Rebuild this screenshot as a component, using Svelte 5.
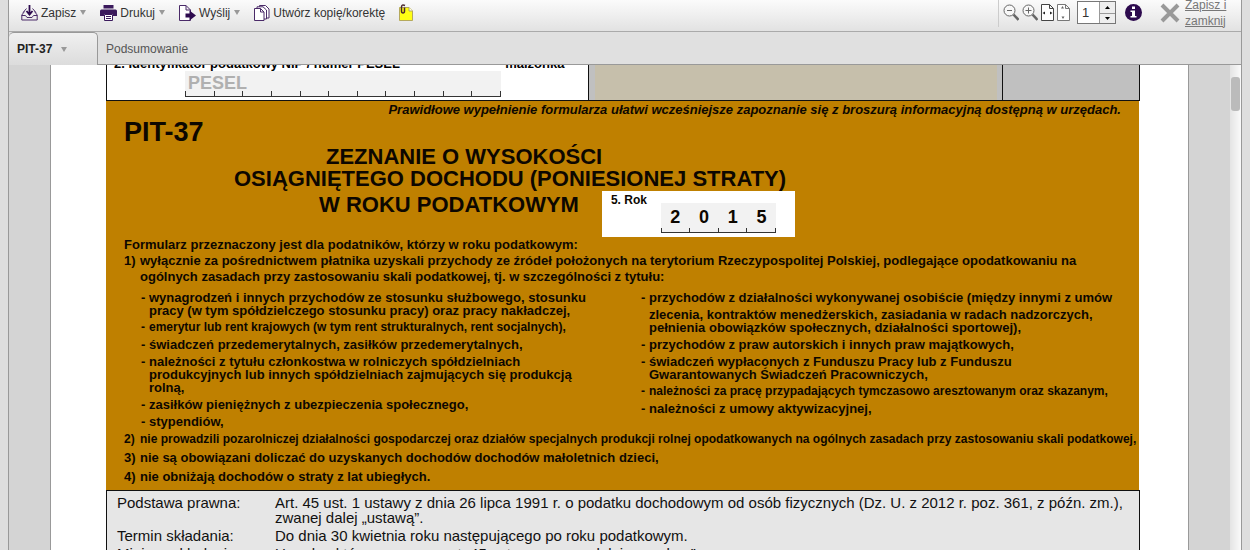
<script lang="ts">
	type Item = { lines: string[]; continued?: boolean; dense?: boolean };

	let pageNumber = $state(1);
	let pesel = $state('');
	let year = $state(['2', '0', '1', '5']);

	const incomeLeft: Item[] = [
		{ lines: ['wynagrodzeń i innych przychodów ze stosunku służbowego, stosunku', 'pracy (w tym spółdzielczego stosunku pracy) oraz pracy nakładczej,'] },
		{ lines: ['emerytur lub rent krajowych (w tym rent strukturalnych, rent socjalnych),'], dense: true },
		{ lines: ['świadczeń przedemerytalnych, zasiłków przedemerytalnych,'] },
		{ lines: ['należności z tytułu członkostwa w rolniczych spółdzielniach', 'produkcyjnych lub innych spółdzielniach zajmujących się produkcją', 'rolną,'] },
		{ lines: ['zasiłków pieniężnych z ubezpieczenia społecznego,'] },
		{ lines: ['stypendiów,'] }
	];

	const incomeRight: Item[] = [
		{ lines: ['przychodów z działalności wykonywanej osobiście (między innymi z umów'] },
		{ lines: ['zlecenia, kontraktów menedżerskich, zasiadania w radach nadzorczych,', 'pełnienia obowiązków społecznych, działalności sportowej),'], continued: true },
		{ lines: ['przychodów z praw autorskich i innych praw majątkowych,'] },
		{ lines: ['świadczeń wypłaconych z Funduszu Pracy lub z Funduszu', 'Gwarantowanych Świadczeń Pracowniczych,'] },
		{ lines: ['należności za pracę przypadających tymczasowo aresztowanym oraz skazanym,'], dense: true },
		{ lines: ['należności z umowy aktywizacyjnej,'] }
	];
</script>

{#snippet incomeList(items: Item[])}
	<ul>
		{#each items as item}
			<li class:continued={item.continued} class:dense={item.dense}>
				{#each item.lines as line}
					<span class="line">{line}</span>
				{/each}
			</li>
		{/each}
	</ul>
{/snippet}

<div class="app">
	<header class="toolbar">
		<div class="actions">
			<button>
				<svg width="17" height="16" viewBox="0 0 17 16" fill="none" stroke="#4a2a68">
					<path d="M3.500 6.500L.8 10v5h15.400v-5l-2.700-3.500M.8 10.500h3.700l1.500 2h5l1.500-2h3.700" />
					<path d="M8.500 0v8M5.500 6l3 3.500 3-3.500" stroke="#2d0a4e" stroke-width="1.800" />
					<path d="M2 7.500l3.500-4M15 7.500l-3.500-4" />
				</svg>
				Zapisz <i class="caret"></i>
			</button>
			<button>
				<svg width="17" height="16" viewBox="0 0 17 16" fill="#3b1a5c">
					<path d="M3.500 0h10v3.500h-10z" />
					<path d="M1.500 4.500h14q1.500 0 1.500 1.500v5h-4V9H4v2H0V6q0-1.500 1.500-1.500z" />
					<path d="M4.500 9.500h8v6h-8z" fill="#fff" stroke="#3b1a5c" />
					<path d="M6 11h5v1H6zM6 13h5v1H6z" />
				</svg>
				Drukuj <i class="caret"></i>
			</button>
			<button>
				<svg width="17" height="16" viewBox="0 0 17 16" fill="#fff" stroke="#4a2a68">
					<path d="M11.500 15.500H.5V.5H7L11.500 5zM7 .5V5h4.500" />
					<path d="M6.500 8.500h4V5.500L17 10.500l-6.500 5v-3h-4z" fill="#2d0a4e" stroke="none" />
				</svg>
				Wyślij <i class="caret"></i>
			</button>
			<button>
				<svg width="16" height="16" viewBox="0 0 16 16" fill="#fff" stroke="#4a2a68">
					<path d="M5.500.5h6l3.500 3.500v9h-9.500z" />
					<path d="M3 1.800h6L12.500 5v9H3z" />
					<path d="M.5 3.500h6L10 7v8.500H.5zM6.500 3.500V7H10" />
				</svg>
				Utwórz kopię/korektę
			</button>
			<button aria-label="Załącznik">
				<svg width="14" height="17" viewBox="0 0 14 17">
					<path d="M.5 3.500H10L13.500 7v9.500H.5z" fill="#ffff14" stroke="#b5a95c" />
					<path d="M10 3.500V7h3.500" fill="#fff" stroke="#b5a95c" />
					<path d="M6 1.500Q2.500 0 2.500 3v4q0 2 1.500 2t1.500-2V3.500" fill="none" stroke="#4a2a30" stroke-width="1.500" />
				</svg>
			</button>
		</div>
		<div class="view-tools">
			<button aria-label="Pomniejsz">
				<svg width="16" height="17" viewBox="0 0 16 17" fill="none" stroke="#666">
					<path d="M10.500 10.500l5 5.500" stroke-width="2.600" />
					<circle cx="6.500" cy="6.500" r="5.500" fill="#f8f8f8" />
					<path d="M4 6.500h5" />
				</svg>
			</button>
			<button aria-label="Powiększ">
				<svg width="16" height="17" viewBox="0 0 16 17" fill="none" stroke="#666">
					<path d="M10.500 10.500l5 5.500" stroke-width="2.600" />
					<circle cx="6.500" cy="6.500" r="5.500" fill="#f8f8f8" />
					<path d="M3.500 6.500h6M6.500 3.500v6" />
				</svg>
			</button>
			<button aria-label="Dopasuj szerokość">
				<svg width="13" height="17" viewBox="0 0 13 17">
					<path d="M.5.5h8l4 4v12H.5zM8.500.5v4h4" fill="#fff" stroke="#444" />
					<path d="M1.500 9L4 7.500v3zM11.500 9L9 7.500v3z" fill="#222" />
				</svg>
			</button>
			<button aria-label="Dopasuj stronę">
				<svg width="13" height="17" viewBox="0 0 13 17">
					<path d="M.5.5h8l4 4v12H.5zM8.500.5v4h4" fill="#fff" stroke="#777" />
					<path d="M5.500 2L7 4.500H4zM6 15l1.500-2.500h-3z" fill="#666" />
				</svg>
			</button>
			<div class="stepper">
				<input type="text" aria-label="Strona" bind:value={pageNumber} />
				<div class="arrows">
					<button aria-label="Następna strona" onclick={() => pageNumber++}>
						<svg width="5" height="3" viewBox="0 0 5 3"><path d="M0 3L2.500 0 5 3z" /></svg>
					</button>
					<button aria-label="Poprzednia strona" onclick={() => pageNumber--}>
						<svg width="5" height="3" viewBox="0 0 5 3"><path d="M0 0h5L2.500 3z" /></svg>
					</button>
				</div>
			</div>
			<button class="info" aria-label="Informacje">
				<svg width="17" height="17" viewBox="0 0 17 17">
					<circle cx="8.500" cy="8.500" r="8.500" fill="#2d0a4e" />
					<path d="M7 2.500h3v2.500H7zM5.500 6.500H10V12h1.500v1.500h-6V12H7V8H5.500z" fill="#fff" />
				</svg>
			</button>
			<a class="close" href="#zamknij">
				<svg width="20" height="20" viewBox="0 0 20 20" stroke="#999" stroke-width="4">
					<path d="M2 2l16 16M18 2L2 18" />
				</svg>
				<span>Zapisz i zamknij</span>
			</a>
		</div>
	</header>

	<nav class="tabs">
		<button class="tab active">PIT-37 <i class="caret"></i></button>
		<button class="tab">Podsumowanie</button>
	</nav>

	<main class="viewer">
		<div class="sheet">
			<section class="identity">
				<div class="taxpayer">
					<label for="pesel">2. Identyfikator <s>podatkowy NIP</s> / numer PESEL <span class="spouse">małżonka</span></label>
					<div class="comb pesel">
						<input id="pesel" type="text" placeholder="PESEL" bind:value={pesel} />
						<div class="ticks">
							{#each Array(11) as _}<i></i>{/each}
						</div>
					</div>
				</div>
				<div class="office"></div>
				<div class="stamp"></div>
			</section>

			<section class="form-head">
				<p class="hint">Prawidłowe wypełnienie formularza ułatwi wcześniejsze zapoznanie się z broszurą informacyjną dostępną w urzędach.</p>
				<h1>PIT-37</h1>
				<div class="title">
					<h2><span class="lead">ZEZNANIE O WYSOKOŚCI</span> OSIĄGNIĘTEGO DOCHODU (PONIESIONEJ STRATY)</h2>
					<div class="year-row">
						<h2>W ROKU PODATKOWYM</h2>
						<div class="year">
							<span>5. Rok</span>
							<div class="comb digits">
								<div class="cells">
									{#each year as _, i}
										<input type="text" maxlength="1" aria-label="Rok, cyfra {i + 1}" bind:value={year[i]} />
									{/each}
								</div>
								<div class="ticks">
									{#each year as _}<i></i>{/each}
								</div>
							</div>
						</div>
					</div>
				</div>

				<div class="scope">
					<p>Formularz przeznaczony jest dla podatników, którzy w roku podatkowym:</p>
					<ol>
						<li>
							wyłącznie za pośrednictwem płatnika uzyskali przychody ze źródeł położonych na terytorium Rzeczypospolitej Polskiej, podlegające opodatkowaniu na
							ogólnych zasadach przy zastosowaniu skali podatkowej, tj. w szczególności z tytułu:
							<div class="income">
								{@render incomeList(incomeLeft)}
								{@render incomeList(incomeRight)}
							</div>
						</li>
						<li class="dense">nie prowadzili pozarolniczej działalności gospodarczej oraz działów specjalnych produkcji rolnej opodatkowanych na ogólnych zasadach przy zastosowaniu skali podatkowej,</li>
						<li>nie są obowiązani doliczać do uzyskanych dochodów dochodów małoletnich dzieci,</li>
						<li>nie obniżają dochodów o straty z lat ubiegłych.</li>
					</ol>
				</div>
			</section>

			<dl class="legal">
				<dt>Podstawa prawna:</dt>
				<dd>Art. 45 ust. 1 ustawy z dnia 26 lipca 1991 r. o podatku dochodowym od osób fizycznych (Dz. U. z 2012 r. poz. 361, z późn. zm.),<br />zwanej dalej „ustawą”.</dd>
				<dt>Termin składania:</dt>
				<dd>Do dnia 30 kwietnia roku następującego po roku podatkowym.</dd>
				<dt>Miejsce składania:</dt>
				<dd>Urząd, o którym mowa w art. 45 ustawy, zwany dalej „urzędem”.</dd>
			</dl>
		</div>
		<div class="scrollbar"><div class="thumb"></div></div>
	</main>
</div>

<style>
	:global(body) {
		margin: 0;
		background: #dedede;
		font-family: 'Liberation Sans', Arial, sans-serif;
	}

	.app {
		box-sizing: border-box;
		height: 100vh;
		margin: 0 8px;
		border: solid #999;
		border-width: 0 1px;
		display: flex;
		flex-direction: column;
		overflow: hidden;
	}

	button,
	input {
		font: inherit;
		color: inherit;
		padding: 0;
		border: 0;
		background: none;
	}

	svg {
		display: block;
		flex: none;
	}

	.toolbar {
		flex: none;
		box-sizing: border-box;
		height: 32px;
		display: flex;
		justify-content: space-between;
		border-bottom: 1px solid #aaa;
		background: linear-gradient(#fbfbfb, #e2e2e2);
		color: #333;
		font-size: 12px;
	}

	.actions {
		display: flex;
		align-items: center;
		gap: 14px;
		padding: 0 0 6px 12px;
	}

	.actions button {
		display: flex;
		align-items: center;
		gap: 3px;
	}

	.caret {
		margin-left: 1px;
		border: 3px solid transparent;
		border-top: 5px solid #999;
		border-bottom: 0;
	}

	.view-tools {
		display: flex;
		align-items: center;
		gap: 3px;
		margin-bottom: 4px;
		padding: 0 12px 2px 4px;
		border-left: 1px solid #ccc;
	}

	.stepper {
		display: flex;
		box-sizing: border-box;
		width: 39px;
		height: 23px;
		margin-left: 4px;
		border: 1px solid #777;
		background: #fff;
	}

	.stepper input {
		width: 21px;
		min-width: 0;
		padding-left: 4px;
		box-sizing: border-box;
		font-size: 13px;
	}

	.arrows {
		flex: 1;
		display: grid;
		grid-template-rows: 1fr 1fr;
		border-left: 1px solid #999;
	}

	.arrows button {
		display: grid;
		place-items: center;
		background: #eee;
	}

	.arrows button + button {
		border-top: 1px solid #999;
	}

	.info {
		margin-left: 6px;
	}

	.close {
		display: flex;
		align-items: center;
		gap: 5px;
		margin-left: 15px;
		color: #777;
		line-height: 16px;
	}

	.close span {
		width: 44px;
	}

	.tabs {
		flex: none;
		box-sizing: border-box;
		height: 33px;
		display: flex;
		font-size: 12px;
		color: #555;
		background: linear-gradient(#999, #999) bottom / 100% 1px no-repeat #e0e0e0;
	}

	.tab {
		padding: 0 8px;
	}

	.tab.active {
		display: flex;
		align-items: center;
		gap: 8px;
		box-sizing: border-box;
		width: 89px;
		border: solid #999;
		border-width: 1px 1px 0 0;
		border-radius: 5px 5px 0 0;
		background: linear-gradient(#f0f0f0, #dcdcdc);
		color: #222;
		font-weight: bold;
	}

	.viewer {
		flex: 1;
		min-height: 0;
		display: flex;
		background: #d4d4d4;
		overflow: hidden;
	}

	.sheet {
		flex: 1;
		min-width: 0;
		margin: 0 41px;
		padding: 0 48px 0 55px;
		border: solid #999;
		border-width: 0 1px;
		background: #fff;
	}

	.scrollbar {
		width: 11px;
		padding-top: 12px;
		background: linear-gradient(90deg, #e4e4e4, #fafafa);
	}

	.thumb {
		height: 34px;
		margin: 0 1px;
		border-radius: 3px;
		background: #bbb;
	}

	.identity {
		box-sizing: border-box;
		height: 36px;
		display: flex;
		border: 1px solid #111;
		border-top: 0;
		font-size: 13px;
		font-weight: bold;
	}

	.taxpayer {
		flex: 0 0 482px;
		display: flex;
		flex-direction: column;
		justify-content: flex-end;
		padding-bottom: 3px;
		overflow: hidden;
		box-sizing: border-box;
	}

	.taxpayer label {
		flex: none;
		padding-left: 7px;
		line-height: 14px;
	}

	.spouse {
		margin-left: 102px;
	}

	.office {
		flex: 1;
		border: solid #c0c0c0;
		border-width: 0 5px 0 6px;
		outline: 1px solid #111;
		background: #c6bfab;
	}

	.stamp {
		flex: 0 0 136px;
		margin-left: 1px;
		background: #c0c0c0;
	}

	.comb {
		display: flex;
		flex-direction: column;
		background: #f2f2f2;
	}

	.pesel {
		flex: none;
		width: 316px;
		margin-left: 78px;
	}

	.pesel input {
		height: 20px;
		padding: 4px 0 0 3px;
		box-sizing: border-box;
		font-size: 18px;
	}

	.pesel input::placeholder {
		color: #b0b0b0;
		opacity: 1;
	}

	.ticks {
		display: flex;
		height: 5px;
		border: solid #333;
		border-width: 0 1px 1px 0;
	}

	.ticks i {
		flex: 1;
		border-left: 1px solid #333;
	}

	.form-head {
		margin-right: 1px;
		padding: 0 18px 2px;
		background: #bf8000;
		color: #0d0700;
	}

	p,
	h1,
	h2,
	ol,
	ul,
	dl,
	dd {
		margin: 0;
		padding: 0;
	}

	.hint {
		font-size: 13px;
		line-height: 17px;
		font-weight: bold;
		font-style: italic;
		text-align: right;
	}

	h1 {
		font-size: 27px;
		line-height: 28px;
	}

	.title {
		margin-left: 110px;
	}

	h2 {
		font-size: 22px;
		line-height: 22px;
		white-space: nowrap;
	}

	.lead {
		display: block;
		padding-left: 92px;
	}

	.year-row {
		display: flex;
		align-items: center;
		gap: 23px;
		padding-left: 85px;
		margin-top: 1px;
	}

	.year-row h2 {
		margin-bottom: 18px;
	}

	.year {
		box-sizing: border-box;
		width: 193px;
		height: 46px;
		display: flex;
		justify-content: space-between;
		padding: 2px 19px 4px 9px;
		background: #fff;
		font-size: 12px;
		line-height: 14px;
		font-weight: bold;
		white-space: nowrap;
	}

	.digits {
		width: 115px;
		margin-top: 10px;
	}

	.cells {
		flex: 1;
		display: flex;
	}

	.cells input {
		flex: 1;
		min-width: 0;
		width: 0;
		padding-top: 4px;
		text-align: center;
		font-size: 18px;
	}

	.scope {
		font-size: 13px;
		line-height: 16px;
		font-weight: bold;
	}

	ol {
		list-style: none;
		counter-reset: item;
	}

	ol > li {
		counter-increment: item;
		padding-left: 16px;
		position: relative;
		margin-bottom: 3px;
	}

	ol > li::before {
		content: counter(item) ')';
		position: absolute;
		left: 0;
	}

	.dense {
		font-size: 12px;
		white-space: nowrap;
	}

	.income {
		display: grid;
		grid-template-columns: 500px 1fr;
		padding-top: 6px;
	}

	ul {
		display: grid;
		align-content: start;
		gap: 4px;
		list-style: none;
	}

	ul li {
		position: relative;
		padding-left: 9px;
		line-height: 13px;
		white-space: nowrap;
	}

	ul li::before {
		content: '-';
		position: absolute;
		left: 1px;
	}

	ul li.continued::before {
		content: none;
	}

	.line {
		display: block;
	}

	.legal {
		display: grid;
		grid-template-columns: 158px 1fr;
		row-gap: 3px;
		padding: 4px 10px;
		border: 1px solid #111;
		background: #e6e6e6;
		color: #111;
		font-size: 15px;
		line-height: 15px;
	}
</style>
